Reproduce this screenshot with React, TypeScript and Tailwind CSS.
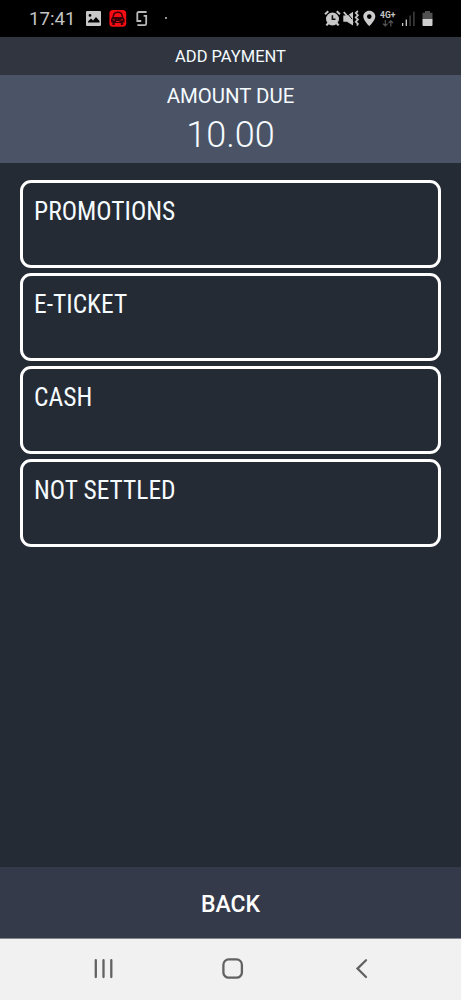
import type { ReactNode } from "react";

const methods = ["PROMOTIONS", "E-TICKET", "CASH", "NOT SETTLED"];

function Spot({ children, className }: { children?: ReactNode; className: string }) {
  return <div className={`shrink-0 ${className}`}>{children}</div>;
}

function StatusBar() {
  return (
    <header className="flex h-[37px] items-start bg-black pt-[10px] text-[#c4c4c4]">
      <div className="ml-[29px] w-[56px] whitespace-nowrap text-[18.7px] leading-[18px]">17:41</div>
      <Spot className="w-[24px]">
        <svg width="17" height="17" viewBox="0 0 17 17">
          <path
            fillRule="evenodd"
            fill="#c8c8c8"
            d="M2 1H15Q16 1 16 2V15Q16 16 15 16H2Q1 16 1 15V2Q1 1 2 1ZM3 12.5H14.5V11L11 7L8 10.5L6 8.5L3 11.5ZM5 4A1.4 1.4 0 1 0 5 6.8A1.4 1.4 0 1 0 5 4Z"
          />
        </svg>
      </Spot>
      <Spot className="w-[26px]">
        <svg width="18" height="18" viewBox="0 0 18 18">
          <rect x="0.4" y="0" width="16.8" height="16.8" rx="3.5" fill="#f90b12" />
          <path d="M4 7L5.3 3.3Q8.8 1.3 12.3 3.3L13.6 7" fill="none" stroke="#380006" strokeWidth="1.5" />
          <path d="M3.4 7H14.2L15.5 9V12.5H14.2V15H11.8V13H5.8V15H3.4V12.5H2.1V9Z" fill="#380006" />
          <path d="M3.7 9.5L6 10.2M13.9 9.5L11.6 10.2M7 11.5H10.6" stroke="#cf1119" strokeWidth="1" />
        </svg>
      </Spot>
      <Spot className="w-[29px]">
        <svg width="14" height="17" viewBox="0 0 14 17" fill="none" stroke="#b9b9b9" strokeWidth="1.8">
          <path d="M11.6 2H3.7Q2.3 2 2.3 3.4V11H6.2M2.4 15.2H9.8Q11.2 15.2 11.2 13.8V5.8H8.6" />
        </svg>
      </Spot>
      <Spot className="mt-[7px] ml-[1px] size-[2px] rounded-full bg-[#c4c4c4]" />
      <div className="flex-1" />
      <div className="flex w-[137.5px] items-start">
        <Spot className="w-[19.5px]">
          <svg width="17" height="17" viewBox="0 0 17 17" fill="none" stroke="#c8c8c8">
            <circle cx="8.5" cy="9" r="5.8" fill="#c8c8c8" strokeWidth="1.4" />
            <path d="M1 4.2L4.3 1.3M16 4.2L12.7 1.3" strokeWidth="2" />
            <path d="M4.5 13L2.4 15.4M12.5 13L14.6 15.4" strokeWidth="2.2" />
            <path d="M8.4 5.2V9.2H11.5" stroke="#101010" strokeWidth="1.6" />
          </svg>
        </Spot>
        <Spot className="w-[20px]">
          <svg width="17" height="17" viewBox="0 0 17 17">
            <path d="M0.3 5.5H4.5L10 1.8V15.6L4 11.8H0.3Z" fill="#c8c8c8" />
            <path d="M2.6 1.2L9.2 9.2" stroke="#000" strokeWidth="1" />
            <path d="M0.8 2L10 13.2" stroke="#c8c8c8" strokeWidth="1.8" />
            <path
              d="M14.9 1L12.8 3L14.9 5.2L12.8 7.4L14.9 9.6L12.8 11.8L14.9 14L14 15.6"
              fill="none"
              stroke="#c4c4c4"
              strokeWidth="1.8"
            />
          </svg>
        </Spot>
        <Spot className="w-[17px]">
          <svg width="14" height="17" viewBox="0 0 14 17">
            <path
              fillRule="evenodd"
              fill="#cccccc"
              d="M6.3 0.8C2.9 0.8 0.3 3.3 0.3 6.6C0.3 10.7 6.3 16.2 6.3 16.2S12.3 10.7 12.3 6.6C12.3 3.3 9.7 0.8 6.3 0.8ZM6.3 4.3A2.3 2.3 0 1 1 6.3 8.9A2.3 2.3 0 1 1 6.3 4.3Z"
            />
          </svg>
        </Spot>
        <Spot className="w-[21px]">
          <div className="mt-[1px] whitespace-nowrap text-[8.5px] font-bold leading-[9px]">4G+</div>
          <svg width="15" height="7" viewBox="0 0 15 7" fill="none" stroke="#555" strokeWidth="1.2">
            <path d="M5.3 0V6M3 3.6L5.3 6L7.6 3.6M10.8 6.5V0.7M8.5 3.1L10.8 0.7L13.1 3.1" />
          </svg>
        </Spot>
        <Spot className="w-[20.5px]">
          <svg width="15" height="17" viewBox="0 0 15 17">
            <path d="M1.6 13V16M5.3 9.5V16" stroke="#c8c8c8" strokeWidth="1.3" />
            <path d="M9.1 5.5V16M12.9 1.8V16" stroke="#4b4b4b" strokeWidth="1.3" />
          </svg>
        </Spot>
        <Spot className="w-[12px]">
          <svg width="12" height="17" viewBox="0 0 12 17">
            <path d="M0.5 2.8H3V1H8V2.8H10.5V9H0.5Z" fill="#505050" />
            <path d="M0.5 9H10.5V15Q10.5 16 9.5 16H1.5Q0.5 16 0.5 15Z" fill="#d0d0d0" />
          </svg>
        </Spot>
      </div>
    </header>
  );
}

export default function App() {
  return (
    <div className="flex h-[1000px] w-[461px] flex-col overflow-hidden bg-[#252b35] font-['Roboto',sans-serif] text-[#f5fbff]">
      <StatusBar />
      <div className="flex h-[38px] items-center justify-center bg-[#30353f] pt-[2px] text-[16.5px]">ADD PAYMENT</div>
      <section className="flex h-[88px] flex-col items-center bg-[#4b5366]">
        <div className="mt-[9px] text-[20.4px] leading-6">AMOUNT DUE</div>
        <div className="mt-[5px] text-[36px] font-light leading-[44px]">10.00</div>
      </section>
      <main className="flex flex-1 flex-col gap-[5.2px] pt-[16.5px] pr-[20px] pl-[20px]">
        {methods.map((name) => (
          <button
            key={name}
            className="flex h-[88px] items-start rounded-[11px] border-3 border-white pt-[13px] pl-[11px] text-left font-['Roboto_Condensed','Roboto',sans-serif] text-[25.5px] leading-[30px] font-stretch-condensed"
          >
            {name}
          </button>
        ))}
      </main>
      <button className="flex h-[71px] items-center justify-center bg-[#353a4a] pt-[5px] text-[23px] font-medium text-white">
        BACK
      </button>
      <nav className="flex h-[62px] items-start border-t border-[#85878f] bg-[#f1f1f1] pt-[18px]">
        <svg className="ml-[93px]" width="22" height="24" viewBox="0 0 22 24" fill="none" stroke="#626262" strokeWidth="2.3" strokeLinecap="round">
          <path d="M2.8 3.2V20M10.5 3.2V20M18.3 3.2V20" />
        </svg>
        <svg className="ml-[106px]" width="24" height="24" viewBox="0 0 24 24" fill="none" stroke="#626262" strokeWidth="2.3">
          <rect x="2.4" y="2.4" width="18.5" height="18.3" rx="5.3" />
        </svg>
        <svg className="ml-[108px]" width="20" height="24" viewBox="0 0 20 24" fill="none" stroke="#626262" strokeWidth="2.3" strokeLinecap="round">
          <path d="M13 3.2L4.5 11.6L13 20" />
        </svg>
      </nav>
    </div>
  );
}
